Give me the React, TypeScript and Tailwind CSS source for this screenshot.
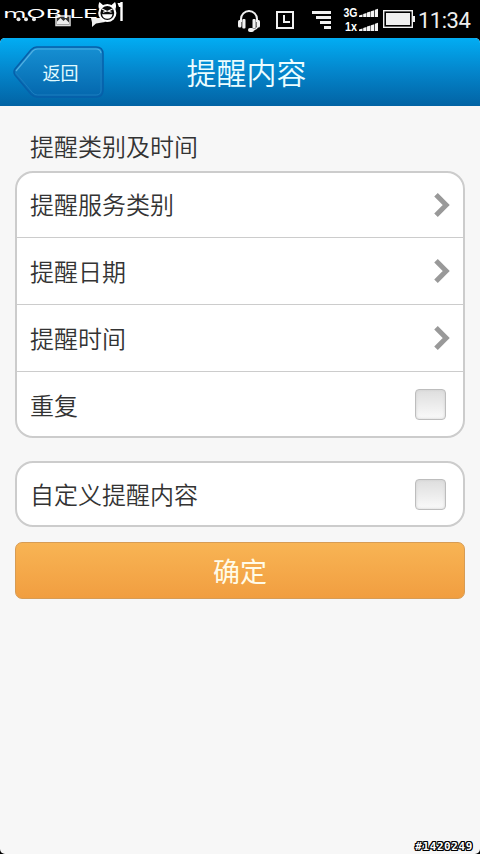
import React from 'react';

const reminderRows = [
  { label: '提醒服务类别', height: 'h-[65px]', textOffset: 'pb-0.5' },
  { label: '提醒日期', height: 'h-[67px]', textOffset: 'pt-0' },
  { label: '提醒时间', height: 'h-[67px]', textOffset: 'pt-0' },
];

const SiteLogo: React.FC = () => (
  <svg width="130" height="30" viewBox="0 0 130 30" className="shrink-0">
    {/* notification icons behind the wordmark */}
    <g fill="#e8e8e8">
      <circle cx="18.500" cy="19.300" r="2" />
      <circle cx="26" cy="19.300" r="2" />
      <circle cx="34" cy="19.300" r="2" />
    </g>
    <rect x="56" y="16" width="14" height="9.500" fill="#333" stroke="#ddd" strokeWidth="1.500" />
    <path d="M57 24.500v-3l3.500-3.500 3 3 2-2 3.500 3.500v2z" fill="#eee" />
    <path d="M91 18h12l2 4-9 1.500-4 3.500v-4.500z" fill="#eee" />
    <text
      x="3"
      y="17.500"
      fill="#fff"
      fontFamily="'DejaVu Sans', sans-serif"
      fontWeight="400"
      fontSize="13"
      textLength="95"
      lengthAdjust="spacingAndGlyphs"
    >
      mOBILE
    </text>
    {/* devil face */}
    <path d="M99 9c-1-3-.5-5 .5-7l4 3.500M115.500 9c1-3 .5-5-.5-7l-4 3.500" fill="#fff" />
    <circle cx="107.300" cy="13" r="8" fill="#0a0a0a" stroke="#fff" strokeWidth="2.200" />
    <path d="M102 9l4.500 2.200-3.500 1M112.500 9l-4.500 2.200 3.500 1" fill="none" stroke="#fff" strokeWidth="1.100" />
    <path d="M102 14.200h10.500c-.5 3-2.500 4.500-5.200 4.500s-4.800-1.500-5.300-4.500z" fill="#fff" />
    <path d="M121.500 2v19" fill="none" stroke="#fff" strokeWidth="2.400" />
    <path d="M117.500 3h4v4h-2.500z" fill="#fff" />
  </svg>
);

const StatusIcons: React.FC = () => (
  <svg width="180" height="38" viewBox="236 0 180 38" className="shrink-0">
    {/* headset */}
    <path d="M241 22v-3a8 8 0 0 1 16 0v3" fill="none" stroke="#f0f0f0" strokeWidth="2" />
    <rect x="238" y="20" width="3.500" height="7.500" rx="1.500" fill="#f0f0f0" />
    <rect x="242.300" y="19" width="3.200" height="9.500" rx="1" fill="#f0f0f0" />
    <rect x="252.500" y="19" width="3.200" height="9.500" rx="1" fill="#f0f0f0" />
    <rect x="256.500" y="20" width="3.500" height="7.500" rx="1.500" fill="#f0f0f0" />
    <path d="M257.500 27c-1 2.500-3 3-6 3" fill="none" stroke="#f0f0f0" strokeWidth="1.500" />
    <rect x="248" y="28" width="6" height="4" rx="2" fill="#f0f0f0" />

    {/* clock */}
    <rect x="277" y="12" width="16" height="16" fill="none" stroke="#f0f0f0" strokeWidth="2" />
    <path d="M284 15v7h6" fill="none" stroke="#f0f0f0" strokeWidth="2" />

    {/* signal lines */}
    <g fill="#f0f0f0">
      <rect x="312" y="11" width="19" height="3" />
      <rect x="316" y="16" width="15" height="3" />
      <rect x="320" y="21" width="11" height="3" />
      <rect x="324" y="26" width="7" height="3" />
    </g>

    <g fill="#fff" fontFamily="'Liberation Sans', sans-serif" fontWeight="700" fontSize="12">
      <text x="343.500" y="17" textLength="14" lengthAdjust="spacingAndGlyphs">3G</text>
      <text x="345" y="31" textLength="12" lengthAdjust="spacingAndGlyphs">1x</text>
    </g>
    {[17, 31].map((base) => (
      <g key={base} fill="#f4f4f4">
        <path d={`M359 ${base}v-1.500l3.500-1v2.500z`} />
        <path d={`M363.200 ${base}v-3l3.300-1v4z`} />
        <path d={`M367 ${base}v-4.500l3.500-1v5.500z`} />
        <path d={`M371 ${base}v-5.700l3.300-1v6.700z`} />
        <path d={`M375 ${base}v-7.300l3-1v8.300z`} />
      </g>
    ))}

    {/* battery */}
    <rect x="383.700" y="10.700" width="28.600" height="16.600" fill="none" stroke="#f0f0f0" strokeWidth="1.400" />
    <rect x="386" y="13" width="24" height="12" fill="#f0f0f0" />
    <rect x="412" y="16" width="3" height="6" fill="#f0f0f0" />
  </svg>
);

const Chevron: React.FC = () => (
  <svg width="18" height="26" viewBox="0 0 18 26" className="shrink-0">
    <path d="M2 2.800L12.200 13 2 23.200" fill="none" stroke="#999" strokeWidth="5" />
  </svg>
);

const CheckBox: React.FC = () => (
  <button
    type="button"
    role="checkbox"
    aria-checked="false"
    className="h-[31px] w-[31px] shrink-0 rounded-[4px] border border-[#bdbdbd] bg-linear-to-b from-[#dedede] to-[#fafafa] shadow-[inset_0_0_3px_#cfcfcf]"
  />
);

const App: React.FC = () => {
  return (
    <div className="flex h-[854px] w-[480px] flex-col overflow-hidden bg-black font-['Noto_Sans_CJK_SC',sans-serif] text-[#333]">
      {/* Status bar */}
      <div className="flex h-[38px] shrink-0 justify-between">
        <SiteLogo />
        <div className="flex">
          <StatusIcons />
          <span className="w-16 pl-0.5 pt-0.5 font-['Roboto',sans-serif] text-[22px] leading-[38px] tracking-[-0.5px] text-[#eee]">
            11:34
          </span>
        </div>
      </div>

      <div className="flex flex-1 flex-col overflow-hidden rounded-[5px] bg-[#f7f7f7]">
        {/* Header */}
        <header className="grid h-[68px] shrink-0 grid-cols-[104px_1fr_91px] items-center bg-linear-to-b from-[#02adf3] via-[#0485cb] to-[#0263a4]">
          <button type="button" className="grid items-center">
            <svg width="91" height="52" viewBox="0 0 92 52" preserveAspectRatio="none" className="col-start-1 row-start-1 ml-[13px]">
              <defs>
                <linearGradient id="back" x1="0" y1="0" x2="0" y2="1">
                  <stop offset="0" stopColor="#1690d3" />
                  <stop offset="1" stopColor="#0467ad" />
                </linearGradient>
              </defs>
              <path
                d="M24 1H84Q91 1 91 8V44Q91 51 84 51H24Q21 51 18 48L2 29Q0 26 2 23L18 4Q21 1 24 1Z"
                fill="url(#back)"
                stroke="#075fa9"
                strokeWidth="1.500"
              />
              <path d="M3 25L20 5Q22 3 25 3H84Q88 3 89 7" fill="none" stroke="#50afe2" strokeWidth="1.200" />
              <path d="M3 27L20 47Q22 49 25 49H84Q89 49 89 44V8" fill="none" stroke="#1d7dc0" strokeWidth="1" />
            </svg>
            <span className="col-start-1 row-start-1 pl-[17px] text-center text-lg leading-none text-[#e2fbff]">返回</span>
          </button>
          <h1 className="pb-0.5 text-center text-[30px] font-[350] leading-none text-[#ecfdff]">提醒内容</h1>
        </header>

        {/* Reminder form */}
        <main className="flex flex-col px-[15px] text-2xl font-[350]">
          <h2 className="h-[65px] pl-[15px] pt-4 leading-[48px]">提醒类别及时间</h2>

          <section className="rounded-[18px] border-2 border-[#ccc] bg-white">
            {reminderRows.map((row) => (
              <div
                key={row.label}
                className={`flex items-center justify-between border-b border-[#ccc] pl-[13px] pr-[11px] ${row.height}`}
              >
                <span className={row.textOffset}>{row.label}</span>
                <Chevron />
              </div>
            ))}
            <div className="flex h-16 items-center justify-between pl-[13px] pr-[17px]">
              <span className="pt-0.5">重复</span>
              <CheckBox />
            </div>
          </section>

          <section className="mt-[23px] flex h-[66px] items-center justify-between rounded-[18px] border-2 border-[#ccc] bg-white pl-[13px] pr-[17px]">
            <span>自定义提醒内容</span>
            <CheckBox />
          </section>

          <button
            type="button"
            className="mt-[15px] h-[57px] rounded-[7px] border border-[#d79c55] bg-linear-to-b from-[#f8b454] to-[#f19e40] text-[27px] font-normal text-[#fffbe8]"
          >
            确定
          </button>
        </main>

        <footer className="mt-auto flex justify-end pr-[7px]">
          <span className="font-['DejaVu_Sans_Mono',monospace] text-[11px] font-bold leading-[15px] tracking-[0.6px] text-white [text-shadow:1px_0_#000,-1px_0_#000,0_1px_#000,0_-1px_#000,1px_1px_#000,-1px_-1px_#000,1px_-1px_#000,-1px_1px_#000]">
            #1420249
          </span>
        </footer>
      </div>
    </div>
  );
};

export default App;
